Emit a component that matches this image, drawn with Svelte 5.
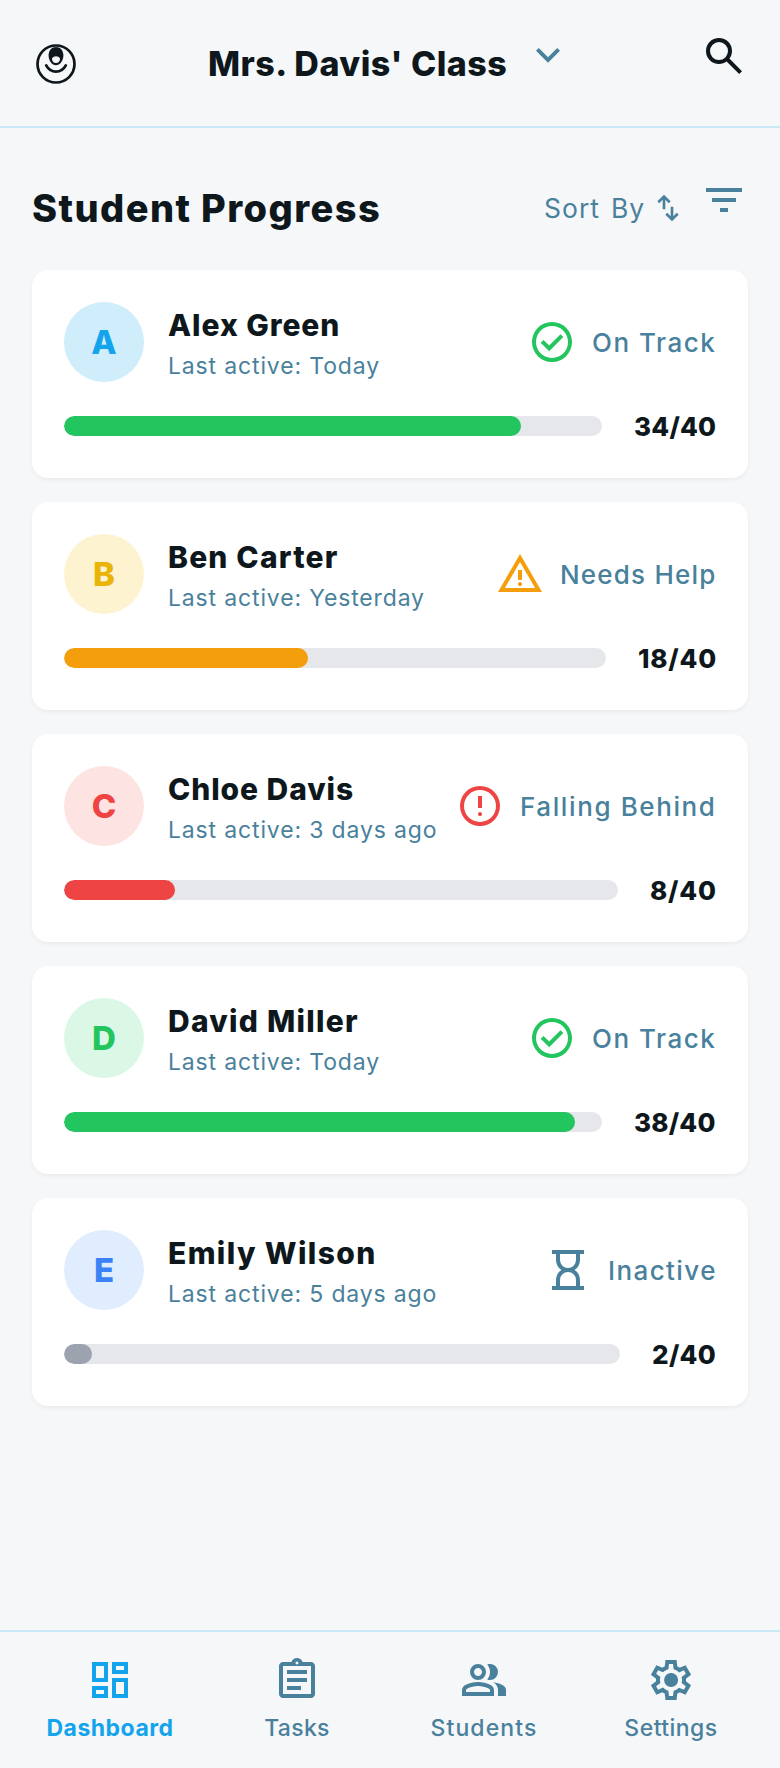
<script>
  const icons = {
    chevron: 'M12 15.375l-6-6 1.4-1.4 4.6 4.6 4.6-4.6 1.4 1.4z',
    search: 'M19.6 21l-6.3-6.3q-.75.6-1.725.95T9.5 16q-2.725 0-4.612-1.888T3 9.5t1.888-4.612T9.5 3t4.613 1.888T16 9.5q0 1.1-.35 2.075T14.7 13.3l6.3 6.3zM9.5 14q1.875 0 3.188-1.312T14 9.5t-1.312-3.187T9.5 5 6.313 6.313 5 9.5t1.313 3.188T9.5 14',
    sort: 'M8 13V5.825L5.425 8.4 4 7l5-5 5 5-1.425 1.4L10 5.825V13zm7 9l-5-5 1.425-1.4L14 18.175V11h2v7.175l2.575-2.575L20 17z',
    filter: 'M10 18v-2h4v2zm-4-5v-2h12v2zM3 8V6h18v2z',
    check: 'M10.6 16.6l7.05-7.05-1.4-1.4-5.65 5.65-2.85-2.85-1.4 1.4zM12 22q-2.075 0-3.9-.788t-3.175-2.137T2.788 15.9 2 12t.788-3.9 2.137-3.175T8.1 2.788 12 2t3.9.788 3.175 2.137T21.213 8.1 22 12t-.788 3.9-2.137 3.175-3.175 2.138T12 22m0-2q3.35 0 5.675-2.325T20 12t-2.325-5.675T12 4 6.325 6.325 4 12t2.325 5.675T12 20',
    warning: 'M1 21L12 2l11 19zm3.45-2h15.1L12 6zM12 18q.425 0 .713-.288T13 17t-.288-.712T12 16t-.712.288T11 17t.288.713T12 18m-1-3h2v-5h-2z',
    error: 'M12 17q.425 0 .713-.288T13 16t-.288-.712T12 15t-.712.288T11 16t.288.713T12 17m-1-4h2V7h-2zm1 9q-2.075 0-3.9-.788t-3.175-2.137T2.788 15.9 2 12t.788-3.9 2.137-3.175T8.1 2.788 12 2t3.9.788 3.175 2.137T21.213 8.1 22 12t-.788 3.9-2.137 3.175-3.175 2.138T12 22m0-2q3.35 0 5.675-2.325T20 12t-2.325-5.675T12 4 6.325 6.325 4 12t2.325 5.675T12 20',
    hourglass: 'M8 20h8v-3q0-1.65-1.175-2.825T12 13t-2.825 1.175T8 17zm4-9q1.65 0 2.825-1.175T16 7V4H8v3q0 1.65 1.175 2.825T12 11M4 22v-2h2v-3q0-1.525.713-2.863T8.7 12q-1.275-.8-1.987-2.137T6 7V4H4V2h16v2h-2v3q0 1.525-.712 2.863T15.3 12q1.275.8 1.988 2.138T18 17v3h2v2z',
    dashboard: 'M13 9V3h8v6zM3 13V3h8v10zm10 8V11h8v10zM3 21v-6h8v6zm2-10h4V5H5zm10 8h4v-6h-4zm0-12h4V5h-4zM5 19h4v-2H5z',
    tasks: 'M5 21q-.825 0-1.412-.587T3 19V5q0-.825.588-1.412T5 3h4.2q.325-.9 1.088-1.45T12 1t1.713.55T14.8 3H19q.825 0 1.413.588T21 5v14q0 .825-.587 1.413T19 21zm0-2h14V5H5zm2-2h7v-2H7zm0-4h10v-2H7zm0-4h10V7H7zm5-4.75q.325 0 .538-.213t.212-.537-.213-.537T12 2.75t-.537.213-.213.537.213.538.537.212',
    students: 'M1 20v-2.8q0-.85.438-1.562T2.6 14.55q1.55-.775 3.15-1.162T9 13t3.25.388 3.15 1.162q.725.375 1.163 1.088T17 17.2V20zm18 0v-3q0-1.1-.612-2.113T16.65 13.15q1.275.15 2.4.513t2.1.887q.9.5 1.375 1.112T23 17v3zM9 12q-1.65 0-2.825-1.175T5 8t1.175-2.825T9 4t2.825 1.175T13 8t-1.175 2.825T9 12m10-4q0 1.65-1.175 2.825T15 12q-.275 0-.7-.062t-.7-.138q.675-.8 1.038-1.775T15 8t-.362-2.025T13.6 4.2q.35-.125.7-.163T15 4q1.65 0 2.825 1.175T19 8M3 18h12v-.8q0-.275-.137-.5t-.363-.35q-1.35-.675-2.725-1.012T9 15t-2.775.338T3.5 16.35q-.225.125-.362.35T3 17.2zm6-8q.825 0 1.413-.587T11 8t-.587-1.412T9 6t-1.412.588T7 8t.588 1.413T9 10',
    settings: 'M9.25 22l-.4-3.2q-.325-.125-.612-.3t-.563-.375L4.7 19.375l-2.75-4.75 2.575-1.95Q4.5 12.5 4.5 12.338v-.675q0-.163.025-.338L1.95 9.375l2.75-4.75 2.975 1.25q.275-.2.575-.375t.6-.3l.4-3.2h5.5l.4 3.2q.325.125.613.3t.562.375l2.975-1.25 2.75 4.75-2.575 1.95q.025.175.025.338v.674q0 .163-.05.338l2.575 1.95-2.75 4.75-2.95-1.25q-.275.2-.575.375t-.6.3l-.4 3.2zm1.75-2h1.975l.35-2.65q.775-.2 1.438-.587t1.212-.938l2.475 1.025.975-1.7-2.15-1.625q.125-.35.175-.737T17.5 12t-.05-.787-.175-.738l2.15-1.625-.975-1.7-2.475 1.05q-.55-.575-1.212-.962t-1.438-.588L13 4h-1.975l-.35 2.65q-.775.2-1.437.588t-1.213.937L5.55 7.15l-.975 1.7 2.15 1.6q-.125.375-.175.75t-.05.8q0 .4.05.775t.175.75l-2.15 1.625.975 1.7 2.475-1.05q.55.575 1.213.963t1.437.587zm1.05-4.5q1.45 0 2.475-1.025T15.55 12t-1.025-2.475T12.05 8.5q-1.475 0-2.487 1.025T8.55 12t1.013 2.475T12.05 15.5'
  };

  const students = [
    { name: 'Alex Green', track: 0.95, seen: 'Today', tone: 'sky', icon: 'check', status: 'On Track', statusTrack: 1.5, statusWidth: 124, state: 'good', done: 34, countTrack: 0.2, countWidth: 82 },
    { name: 'Ben Carter', track: 1.2, seen: 'Yesterday', tone: 'yellow', icon: 'warning', status: 'Needs Help', statusTrack: 1.2, statusWidth: 156, state: 'warn', done: 18, countTrack: 0.8, countWidth: 78 },
    { name: 'Chloe Davis', track: 0.92, seen: '3 days ago', tone: 'red', icon: 'error', status: 'Falling Behind', statusTrack: 1.6, statusWidth: 196, state: 'bad', done: 8, countTrack: 0.8, countWidth: 66 },
    { name: 'David Miller', track: 1.25, seen: 'Today', tone: 'green', icon: 'check', status: 'On Track', statusTrack: 1.5, statusWidth: 124, state: 'good', done: 38, countTrack: 0.2, countWidth: 82 },
    { name: 'Emily Wilson', track: 1.38, seen: '5 days ago', tone: 'blue', icon: 'hourglass', status: 'Inactive', statusTrack: 1.4, statusWidth: 108, state: 'idle', done: 2, countTrack: 0.3, countWidth: 64 }
  ];
  const total = 40;

  const tabs = [
    { label: 'Dashboard', icon: 'dashboard', track: 0.5, active: true },
    { label: 'Tasks', icon: 'tasks', track: 0.3 },
    { label: 'Students', icon: 'students', track: 1.1 },
    { label: 'Settings', icon: 'settings', track: 0.45 }
  ];
</script>

{#snippet icon(name, size = 48)}
  <svg width={size} height={size} viewBox="0 0 24 24" fill="currentColor" aria-hidden="true"><path d={icons[name]} /></svg>
{/snippet}

<div class="screen">
  <header>
    <svg class="profile" width="48" height="48" viewBox="0 0 48 48" fill="none" aria-hidden="true">
      <circle cx="24" cy="24" r="18.5" stroke="currentColor" stroke-width="2.7" />
      <path fill="currentColor" fill-rule="evenodd" d="M24 7c4.200 0 7.400 3.500 7.400 8.200 0 5.400-3.300 10-7.400 10s-7.400-4.600-7.400-10c0-4.700 3.200-8.200 7.400-8.200zM20 18.500c-.2 2.700 1.500 4.600 4 4.600s4.200-1.900 4-4.600c-.9-1.400-2.400-2.200-4-2.200s-3.100.8-4 2.200z" />
      <path stroke="currentColor" stroke-width="2.700" stroke-linecap="round" d="M14.200 25.400c2.200 4.200 5.700 6.200 9.800 6.200s7.600-2 9.800-6.200" />
    </svg>
    <div class="class-picker">
      <h1>Mrs. Davis' Class</h1>
      <span class="raised muted">{@render icon('chevron')}</span>
    </div>
    <span class="raised">{@render icon('search')}</span>
  </header>

  <main>
    <div class="section-head">
      <h2>Student Progress</h2>
      <div class="tools">
        <span class="sort">Sort By</span>
        {@render icon('sort', 32)}
        <span class="raised filter">{@render icon('filter')}</span>
      </div>
    </div>

    <div class="list">
      {#each students as s}
        <article class={s.state}>
          <div class="top">
            <div class="avatar {s.tone}">{s.name[0]}</div>
            <div class="who">
              <h3 style:letter-spacing="{s.track}px">{s.name}</h3>
              <p>Last active: {s.seen}</p>
            </div>
            <div class="status">
              <span class="status-icon">{@render icon(s.icon)}</span>
              <span class="status-text" style:width="{s.statusWidth}px" style:letter-spacing="{s.statusTrack}px">{s.status}</span>
            </div>
          </div>
          <div class="progress">
            <div class="bar"><div class="fill" style:width="{(s.done / total) * 100}%"></div></div>
            <span class="count" style:width="{s.countWidth}px" style:letter-spacing="{s.countTrack}px">{s.done}/{total}</span>
          </div>
        </article>
      {/each}
    </div>
  </main>

  <nav>
    {#each tabs as t}
      <div class="tab" class:active={t.active}>
        {@render icon(t.icon)}
        <span style:letter-spacing="{t.track}px">{t.label}</span>
      </div>
    {/each}
  </nav>
</div>

<style>
  :global(body) { background: #f6f7f9; }
  .screen {
    display: flex;
    flex-direction: column;
    height: 1768px;
    box-sizing: border-box;
    overflow: hidden;
    background: #f6f7f9;
    color: #0d171c;
    font-family: Inter, "Liberation Sans", sans-serif;
  }
  svg { display: block; flex: none; }
  h1, h2, h3, p { margin: 0; white-space: nowrap; }

  header {
    display: flex;
    align-items: center;
    justify-content: space-between;
    height: 128px;
    box-sizing: border-box;
    padding: 2px 32px 0;
    border-bottom: 2px solid #c9e7f6;
  }
  .raised { display: block; margin-bottom: 16px; }
  .muted { color: #49819c; }
  .class-picker { display: flex; align-items: center; }
  h1 {
    width: 316px;
    font-size: 34px;
    font-weight: 800;
    line-height: 54px;
    letter-spacing: 0.5px;
  }

  main { flex: 1; padding: 48px 32px 0; }
  .section-head {
    display: flex;
    align-items: center;
    justify-content: space-between;
    height: 64px;
    margin-bottom: 30px;
  }
  h2 { font-size: 38px; font-weight: 800; line-height: 50px; letter-spacing: 1.42px; }
  .tools { display: flex; align-items: center; color: #49819c; }
  .sort {
    width: 108px;
    font-size: 26.5px;
    line-height: 40px;
    letter-spacing: 1px;
    word-spacing: 2.5px;
    white-space: nowrap;
  }
  .filter { margin-left: 16px; }

  .list { display: flex; flex-direction: column; gap: 24px; }
  article {
    height: 208px;
    box-sizing: border-box;
    padding: 32px;
    border-radius: 16px;
    background: #fff;
    box-shadow: 0 2px 4px rgba(0, 0, 0, 0.05);
  }
  .top { display: flex; gap: 24px; height: 80px; }
  .avatar {
    display: grid;
    place-items: center;
    flex: none;
    width: 80px;
    height: 80px;
    border-radius: 50%;
    font-size: 33px;
    font-weight: 800;
  }
  .sky { background: #d0edfb; color: #13a4ec; }
  .yellow { background: #fef3d0; color: #eab308; }
  .red { background: #fee3e3; color: #ef4444; }
  .green { background: #dbf8e6; color: #22c55e; }
  .blue { background: #dfedff; color: #3b82f6; }
  .who { flex: 1; min-width: 0; }
  h3 { font-size: 30px; font-weight: 800; line-height: 46px; }
  p {
    color: #49819c;
    font-size: 23px;
    line-height: 36px;
    letter-spacing: 0.85px;
  }
  .status {
    display: flex;
    align-items: center;
    gap: 16px;
    flex: none;
    color: #49819c;
    font-size: 26px;
    font-weight: 500;
    line-height: 40px;
    white-space: nowrap;
  }
  .status-text { padding-top: 1px; }
  .good { --state: #22c55e; --fill: #22c55e; }
  .warn { --state: #f59e0b; --fill: #f59e0b; }
  .bad { --state: #ef4444; --fill: #ef4444; }
  .idle { --state: #49819c; --fill: #9ca3af; }
  .status-icon { color: var(--state); }

  .progress { display: flex; align-items: center; gap: 32px; height: 40px; margin-top: 24px; }
  .bar { flex: 1; height: 20px; border-radius: 10px; overflow: hidden; background: #e5e7eb; }
  .fill { height: 100%; border-radius: 10px; background: var(--fill); }
  .count {
    flex: none;
    padding-top: 1px;
    font-size: 26px;
    font-weight: 800;
    line-height: 40px;
    white-space: nowrap;
  }

  nav {
    display: grid;
    grid-template-columns: repeat(4, 1fr);
    height: 138px;
    box-sizing: border-box;
    padding: 24px 16px 0;
    border-top: 2px solid #c9e7f6;
  }
  .tab {
    display: flex;
    flex-direction: column;
    align-items: center;
    gap: 8px;
    color: #49819c;
    font-size: 23px;
    font-weight: 500;
    line-height: 32px;
  }
  .tab span { padding-left: 1px; }
  .active { color: #13a4ec; font-weight: 700; }
</style>
